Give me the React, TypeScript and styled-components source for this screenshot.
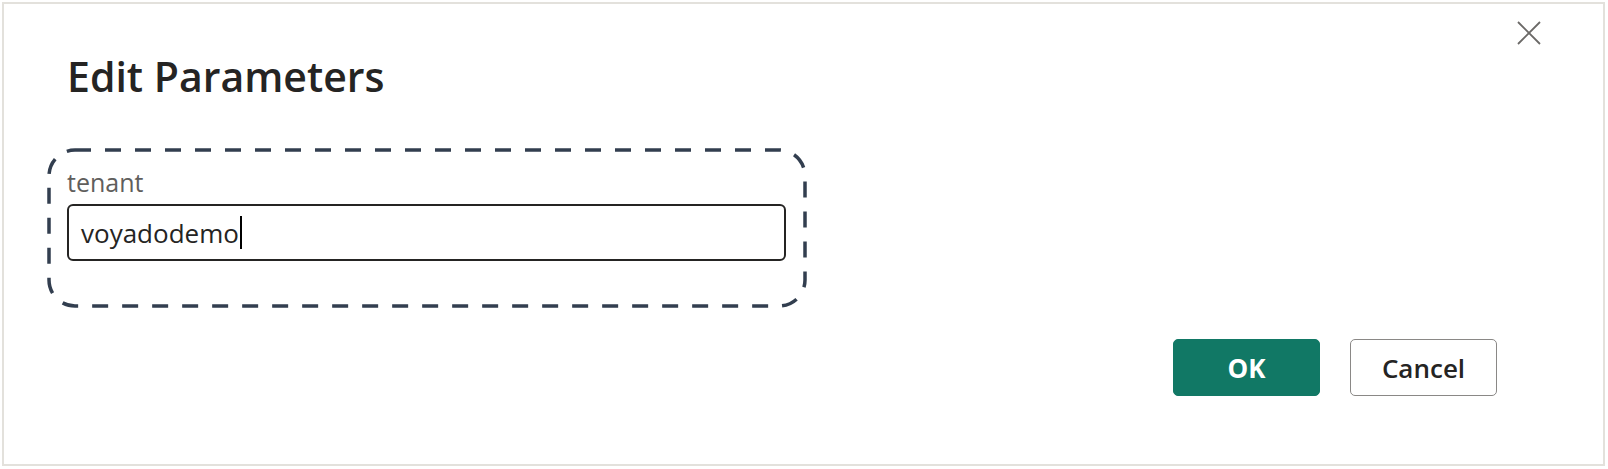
import React from "react";
import styled, { createGlobalStyle } from "styled-components";

const Global = createGlobalStyle`
  html, body { margin: 0; padding: 0; background: #ffffff; }
  body { font-family: "Open Sans", "Noto Sans", sans-serif; }
  * { box-sizing: border-box; }
`;

const Page = styled.div`
  width: 1608px;
  height: 469px;
  padding: 2px 3px 3px 2px;
  background: #ffffff;
`;

const Dialog = styled.div`
  position: relative;
  width: 100%;
  height: 100%;
  border: 2px solid #e3e1dc;
  background: #ffffff;
  display: flex;
  flex-direction: column;
  padding: 0 106px 0 43px;
`;

const Title = styled.h1`
  margin: 46px 0 0 20px;
  font-family: "Open Sans", sans-serif;
  font-weight: 600;
  font-size: 41px;
  line-height: 52px;
  color: #252423;
  letter-spacing: 0;
`;

const Highlight = styled.div`
  position: relative;
  width: 760px;
  height: 160px;
  margin-top: 46px;
  padding: 17px 21px 0 20px;
  display: flex;
  flex-direction: column;
`;

const DashOutline = styled.svg`
  position: absolute;
  inset: 0;
  width: 100%;
  height: 100%;
  overflow: visible;
  pointer-events: none;
`;

const Label = styled.label`
  font-family: "Open Sans", sans-serif;
  font-size: 25px;
  line-height: 34px;
  color: #605e5c;
`;

const InputBox = styled.div`
  margin-top: 5px;
  height: 57px;
  border: 2px solid #252423;
  border-radius: 6px;
  display: flex;
  align-items: center;
  padding: 0 12px;
  font-family: "Open Sans", sans-serif;
  font-size: 26px;
  color: #252423;
`;

const Caret = styled.span`
  display: inline-block;
  width: 2px;
  height: 33px;
  background: #000000;
  margin-left: 1px;
`;

const Footer = styled.div`
  margin-top: 31px;
  display: flex;
  justify-content: flex-end;
  gap: 30px;
`;

const Button = styled.button<{ $primary?: boolean }>`
  width: 147px;
  height: 57px;
  border-radius: 5px;
  font-family: "Open Sans", sans-serif;
  font-size: 26px;
  font-weight: ${(p) => (p.$primary ? 700 : 600)};
  color: ${(p) => (p.$primary ? "#ffffff" : "#252423")};
  background: ${(p) => (p.$primary ? "#117865" : "#ffffff")};
  border: ${(p) => (p.$primary ? "1px solid #117865" : "1px solid #8a8886")};
  padding: 0;
  cursor: pointer;
`;

const Close = styled.button`
  position: absolute;
  top: 16px;
  right: 61px;
  width: 26px;
  height: 26px;
  border: none;
  background: transparent;
  padding: 0;
  display: flex;
  align-items: center;
  justify-content: center;
`;

export default function App() {
  return (
    <>
      <Global />
      <Page>
        <Dialog>
          <Close aria-label="Close">
            <svg width="24" height="24" viewBox="0 0 24 24">
              <path d="M1 1 L23 23 M23 1 L1 23" stroke="#6b6967" strokeWidth="1.8" fill="none" />
            </svg>
          </Close>
          <Title>Edit Parameters</Title>
          <Highlight>
            <DashOutline>
              <rect
                x="2"
                y="2"
                width="756"
                height="156"
                rx="26"
                ry="26"
                fill="none"
                stroke="#323e4f"
                strokeWidth="3.5"
                strokeDasharray="16 14"
              />
            </DashOutline>
            <Label>tenant</Label>
            <InputBox>
              voyadodemo
              <Caret />
            </InputBox>
          </Highlight>
          <Footer>
            <Button $primary>OK</Button>
            <Button>Cancel</Button>
          </Footer>
        </Dialog>
      </Page>
    </>
  );
}
